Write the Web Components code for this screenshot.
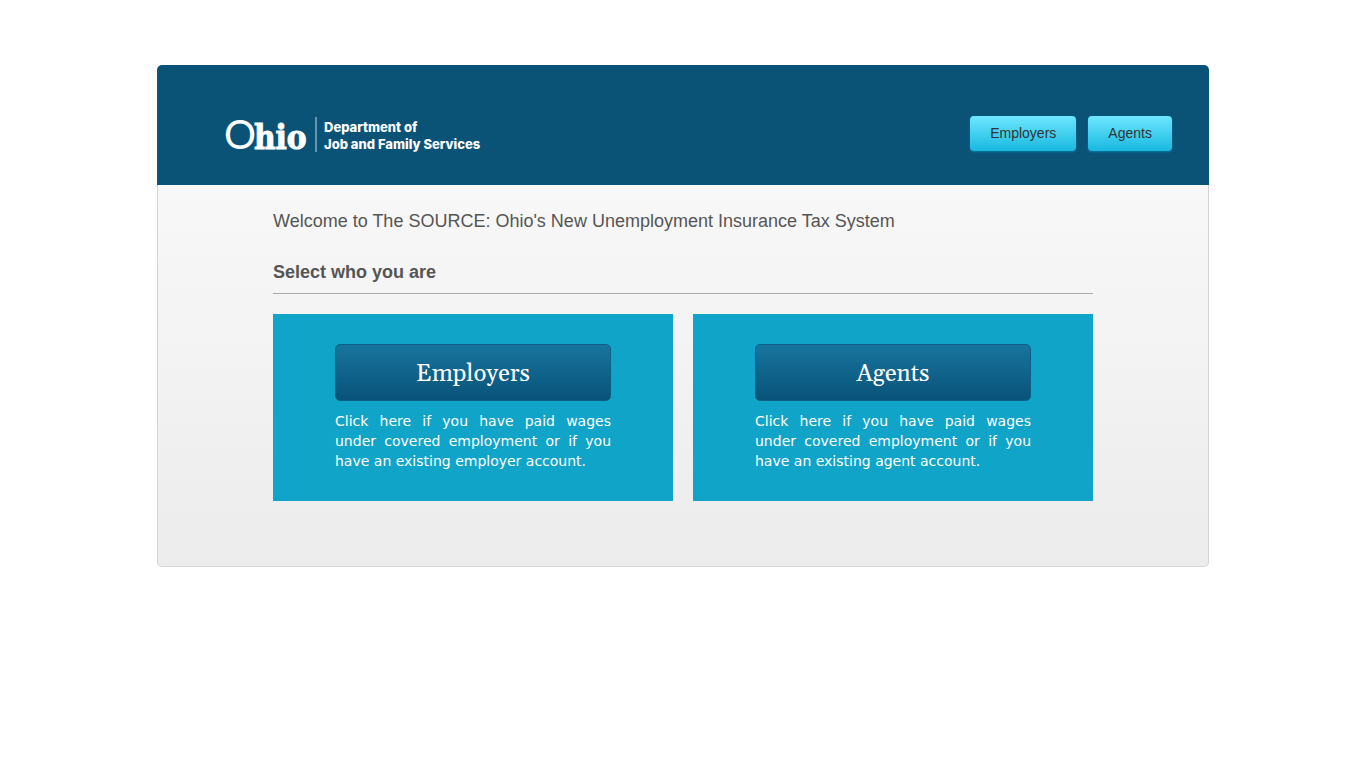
<!DOCTYPE html>
<html lang="en">
<head>
<meta charset="utf-8">
<meta name="viewport" content="width=device-width, initial-scale=1">
<title>The SOURCE</title>
<style>
  body { margin: 0; background: #fff; font-family: "Liberation Sans", Arial, sans-serif; color: #555; }
</style>
</head>
<body>
<source-page></source-page>

<template id="page-tpl">
  <style>
    :host { display: block; width: 77%; margin: 65px auto; }
    main {
      box-sizing: border-box; border: 1px solid #d5d5d5; border-top: 0;
      border-radius: 0 0 5px 5px; background: linear-gradient(#f8f8f8, #ececec);
      padding: 24px 20px 65px;
    }
    .content { max-width: 820px; margin: 0 auto; }
    h1, h2 { margin: 0; font-size: 18px; line-height: 24px; }
    h1 { font-weight: 400; }
    h2 { margin-top: 27px; padding-bottom: 9px; border-bottom: 1px solid #aaa; }
    .cards { display: grid; grid-template-columns: repeat(auto-fit, minmax(300px, 1fr)); gap: 20px; margin-top: 20px; }
  </style>
  <site-header></site-header>
  <main>
    <div class="content">
      <h1>Welcome to The SOURCE: Ohio's New Unemployment Insurance Tax System</h1>
      <h2>Select who you are</h2>
      <div class="cards">
        <role-card label="Employers">Click here if you have paid wages under covered employment or if you have an existing employer account.</role-card>
        <role-card label="Agents">Click here if you have paid wages under covered employment or if you have an existing agent account.</role-card>
      </div>
    </div>
  </main>
</template>

<template id="header-tpl">
  <style>
    :host { display: block; }
    header {
      display: flex; flex-wrap: wrap; align-items: center; justify-content: space-between; gap: 12px;
      box-sizing: border-box; min-height: 120px; padding: 20px 37px 3px 68px;
      background: #0a5377; border-radius: 5px 5px 0 0;
    }
    nav { display: flex; gap: 12px; }
  </style>
  <header>
    <agency-logo></agency-logo>
    <nav aria-label="Main">
      <nav-button>Employers</nav-button>
      <nav-button>Agents</nav-button>
    </nav>
  </header>
</template>

<template id="logo-tpl">
  <style>
    :host { display: block; color: #fff; }
    svg { display: block; width: 264px; height: 60px; }
    .o { font: 400 40px Lato, sans-serif; }
    .hio { font: 700 33px "DejaVu Serif Condensed", "DejaVu Serif", serif; stroke: currentColor; stroke-width: 1px; }
    .dept { font: 800 13px Inter, sans-serif; }
  </style>
  <svg viewBox="0 0 264 60" fill="currentColor">
    <text class="o" x="-1" y="45">O</text>
    <text class="hio" x="29" y="45">hio</text>
    <rect x="90" y="13" width="2" height="35" fill="#6598b0"/>
    <text class="dept" x="99" y="28">Department of</text>
    <text class="dept" x="99" y="45">Job and Family Services</text>
  </svg>
</template>

<template id="nav-button-tpl">
  <style>
    :host { display: block; }
    button {
      display: block; height: 35px; padding: 0 20px 2px; border: 0; border-radius: 4px;
      background: linear-gradient(#6ee7ff, #18b8e0); box-shadow: 0 1px 2px #077ba3;
      color: #333; font: 14px "Liberation Sans", Arial, sans-serif; cursor: pointer;
    }
  </style>
  <button type="button"><slot></slot></button>
</template>

<template id="card-tpl">
  <style>
    :host { display: block; padding: 30px 62px; background: #0fa4c8; color: #fff; }
    button {
      display: block; width: 100%; height: 57px; padding: 2px 0 0; border: 1px solid #0d5f86; border-radius: 5px;
      background: linear-gradient(#17759d, #09527a); color: #fff;
      font: 24px Gelasio, Georgia, "Liberation Serif", serif; cursor: pointer;
    }
    p { margin: 10px 0 0; font: 14px/20px Verdana, "DejaVu Sans", sans-serif; text-align: justify; }
  </style>
  <button type="button"></button>
  <p><slot></slot></p>
</template>

<script>
  class TemplateElement extends HTMLElement {
    constructor() {
      super();
      const tpl = document.getElementById(this.constructor.template);
      this.attachShadow({ mode: "open" }).append(tpl.content.cloneNode(true));
    }
  }
  class AgencyLogo extends TemplateElement { static template = "logo-tpl"; }
  class NavButton extends TemplateElement { static template = "nav-button-tpl"; }
  class RoleCard extends TemplateElement {
    static template = "card-tpl";
    connectedCallback() {
      this.shadowRoot.querySelector("button").textContent = this.getAttribute("label");
    }
  }
  class SiteHeader extends TemplateElement { static template = "header-tpl"; }
  class SourcePage extends TemplateElement { static template = "page-tpl"; }

  customElements.define("agency-logo", AgencyLogo);
  customElements.define("nav-button", NavButton);
  customElements.define("role-card", RoleCard);
  customElements.define("site-header", SiteHeader);
  customElements.define("source-page", SourcePage);
</script>
</body>
</html>
